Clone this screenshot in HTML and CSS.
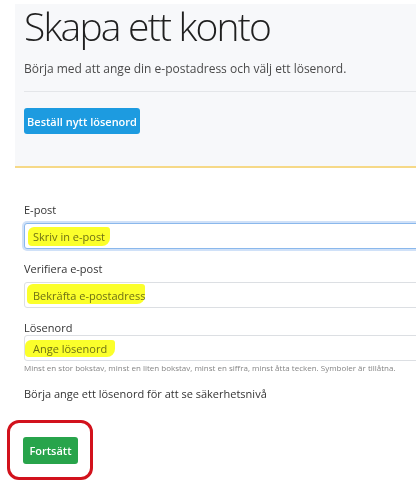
FILE: index.html
```html
<!DOCTYPE html>
<html lang="sv">
<head>
    <meta charset="UTF-8">
    <meta name="viewport" content="width=device-width, initial-scale=1.0">
    <title>Skapa ett konto</title>
    <link rel="stylesheet" href="styles.css">
</head>
<body>
<div class="page">
    <div class="jumbotron">
        <h1>Skapa ett konto</h1>
        <p class="lead">Börja med att ange din e-postadress och välj ett lösenord.</p>
        <hr>
        <button class="btn btn-blue">Beställ nytt lösenord</button>
    </div>

    <form class="signup">
        <div class="group">
            <label for="email">E-post</label>
            <div class="field">
                <input id="email" class="focused" type="email" placeholder="Skriv in e-post">
                <span class="mark mark-1"></span>
            </div>
        </div>
        <div class="group">
            <label for="email2">Verifiera e-post</label>
            <div class="field">
                <input id="email2" type="email" placeholder="Bekräfta e-postadress">
                <span class="mark mark-2"></span>
            </div>
        </div>
        <div class="group">
            <label for="password" class="tight">Lösenord</label>
            <div class="field">
                <input id="password" type="password" placeholder="Ange lösenord">
                <span class="mark mark-3"></span>
            </div>
            <p class="help">Minst en stor bokstav, minst en liten bokstav, minst en siffra, minst åtta tecken. Symboler är tillåtna.</p>
        </div>
        <p class="strength">Börja ange ett lösenord för att se säkerhetsnivå</p>
        <div class="circled">
            <button type="button" class="btn btn-green">Fortsätt</button>
        </div>
    </form>
</div>
</body>
</html>
```

FILE: styles.css
```css
html, body {
    margin: 0;
    padding: 0;
    background: #fff;
    overflow: hidden;
}

body {
    font-family: 'Open Sans', 'Noto Sans', sans-serif;
    color: #333;
}

.jumbotron {
    margin: 4px 0 0 15px;
    padding: 2px 0 32px 9px;
    background: #f7f8fa;
    border-bottom: 2px solid #f6d987;
}

h1 {
    margin: 0;
    font-size: 39px;
    line-height: 40px;
    font-weight: 300;
    letter-spacing: -1.8px;
    color: #1f1f1f;
}

.lead {
    margin: 15px 0 0;
    font-size: 12px;
    line-height: 16px;
    color: #4a4a4a;
}

hr {
    margin: 14px 0 0;
    border: 0;
    border-top: 1px solid #e4e6e9;
}

.btn {
    border: none;
    border-radius: 3px;
    color: #fff;
    font-family: inherit;
    font-size: 11px;
    font-weight: 600;
    cursor: pointer;
    padding: 0;
}

.btn-blue {
    margin-top: 16px;
    width: 116px;
    height: 26px;
    background: #1d9be0;
}

.btn-green {
    width: 55px;
    height: 27px;
    background: #28a44b;
}

.signup {
    padding: 35px 0 0 24px;
}

.group {
    margin-bottom: 13px;
}

label {
    display: block;
    font-size: 11px;
    line-height: 14px;
    margin-bottom: 6px;
    color: #333;
}

label.tight {
    margin-bottom: 0;
}

.field {
    position: relative;
}

.field input {
    display: block;
    box-sizing: border-box;
    width: 420px;
    height: 26px;
    padding: 0 8px;
    border: 1px solid #dcdfe3;
    border-radius: 3px;
    font-family: inherit;
    font-size: 11px;
    outline: none;
}

.field input::placeholder {
    color: #707070;
}

.field input.focused {
    border-color: #8ab8ec;
    box-shadow: 0 0 0 2px rgba(120, 170, 235, 0.35);
}

/* highlighter strokes drawn over the screenshot */
.mark {
    position: absolute;
    background: #fbff2b;
    mix-blend-mode: multiply;
    border-radius: 6px 3px 8px 4px;
    pointer-events: none;
}

.mark-1 { left: 4px; top: 4px; width: 82px; height: 19px; }
.mark-2 { left: 3px; top: 2px; width: 118px; height: 20px; }
.mark-3 { left: 1px; top: 5px; width: 90px; height: 17px; }

.help {
    margin: 1px 0 0;
    font-size: 8px;
    line-height: 12px;
    color: #858585;
}

.strength {
    margin: 0;
    font-size: 11px;
    line-height: 14px;
    color: #333;
}

.circled {
    display: inline-block;
    margin: 19px 0 0 -17px;
    padding: 14px 12px 13px 13px;
    border: 3px solid #d2121c;
    border-radius: 12px;
}

.circled .btn {
    display: block;
}
```
